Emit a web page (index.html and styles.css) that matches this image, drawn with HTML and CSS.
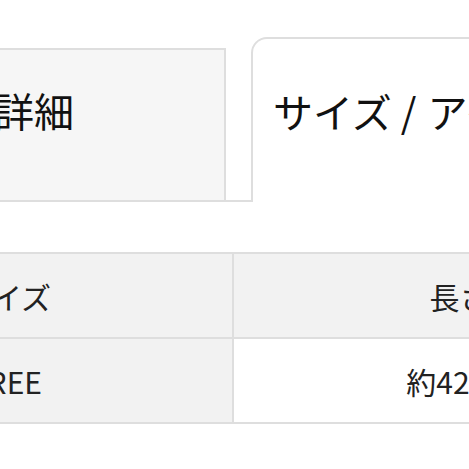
FILE: index.html
```html
<!DOCTYPE html>
<html lang="ja">
<head>
    <meta charset="UTF-8">
    <meta name="viewport" content="width=device-width, initial-scale=1.0">
    <title>サイズ/アイテム情報</title>
    <link rel="stylesheet" href="styles.css">
</head>
<body>

    <div class="page">
        <!-- Tabs -->
        <div class="tabs">
            <div class="tab">商品詳細</div>
            <div class="tab active">サイズ<span class="sep">/</span>アイテム情報</div>
        </div>

        <!-- Size table -->
        <table class="size-table">
            <tr class="head">
                <th>サイズ</th>
                <th>長さ</th>
            </tr>
            <tr>
                <th>FREE</th>
                <td>約42cm</td>
            </tr>
        </table>
    </div>

</body>
</html>
```

FILE: styles.css
```css
* {
    box-sizing: border-box;
}
body {
    margin: 0;
    width: 469px;
    height: 469px;
    overflow: hidden;
    background: white;
    font-family: "Noto Sans CJK JP", "Noto Sans", sans-serif;
    color: #222;
}
.page {
    margin-left: -221px;
    width: 908px;
}
.tabs {
    display: flex;
    align-items: flex-end;
    gap: 25px;
    padding-top: 37px;
    padding-left: 119px;
    border-bottom: 2px solid #dedede;
}
.tab {
    width: 331px;
    height: 152px;
    padding: 40px 0 0 14px;
    background-color: #f6f6f6;
    border: 2px solid #dedede;
    border-bottom: none;
    font-size: 40px;
    line-height: 40px;
    color: #111;
    white-space: nowrap;
}
.tab.active {
    width: 440px;
    height: 165px;
    margin-bottom: -2px;
    padding-top: 52px;
    padding-left: 20px;
    background-color: white;
    border-top-left-radius: 16px;
}
.sep {
    margin: 0 11px 0 9px;
}
.size-table {
    width: 908px;
    margin-top: 50px;
    border-collapse: collapse;
    table-layout: fixed;
}
.size-table th,
.size-table td {
    width: 50%;
    border: 2px solid #dedede;
    text-align: center;
    vertical-align: middle;
    font-size: 30px;
    font-weight: normal;
    color: #222;
    padding: 0;
}
.size-table th {
    background-color: #f2f2f2;
}
.size-table td {
    background-color: white;
}
.size-table tr {
    height: 85px;
}
```
